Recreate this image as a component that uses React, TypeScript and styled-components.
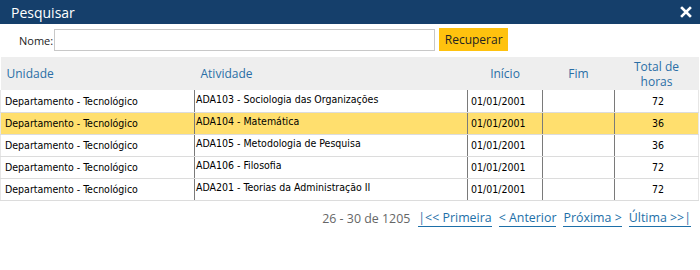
import styled, { createGlobalStyle } from "styled-components";

const GlobalStyle = createGlobalStyle`
  html, body {
    margin: 0;
    padding: 0;
    background: #fff;
  }
`;

const Dialog = styled.div`
  width: 700px;
  height: 270px;
  background: #fff;
  font-family: "Open Sans", "Noto Sans", sans-serif;
`;

const TitleBar = styled.div`
  height: 24px;
  background: #153f6b;
  color: #fff;
  display: flex;
  align-items: center;
  justify-content: space-between;
  padding: 0 8px 0 11px;
  font-size: 14px;
`;

const CloseButton = styled.span`
  display: flex;
  width: 12px;
  height: 12px;
  cursor: pointer;
`;

const SearchRow = styled.div`
  display: flex;
  align-items: center;
  height: 24px;
  margin-top: 4px;
  padding-left: 19px;
`;

const Label = styled.label`
  font-size: 11px;
  color: #222;
  margin-right: 1px;
`;

const Input = styled.input`
  width: 381px;
  height: 22px;
  box-sizing: border-box;
  border: 1px solid #c8c8c8;
  margin: 0 4px 0 0;
`;

const YellowButton = styled.button`
  height: 23px;
  width: 69px;
  background: #ffc20e;
  border: none;
  font-family: "Open Sans", sans-serif;
  font-size: 12px;
  color: #222;
  padding: 0;
  margin-top: -1px;
`;

const Table = styled.table`
  margin-top: 5px;
  width: 698px;
  border-collapse: collapse;
  table-layout: fixed;
`;

const HeadRow = styled.tr`
  height: 33px;
`;

const Th = styled.th<{ $align?: string }>`
  background: #eeeeee;
  color: #2a6ea6;
  font-weight: normal;
  font-size: 12px;
  line-height: 15px;
  padding: 0 6px;
  text-align: ${(p) => p.$align || "left"};
`;

const Row = styled.tr<{ $selected?: boolean }>`
  height: 22px;
  background: ${(p) => (p.$selected ? "#ffdf6e" : "#fff")};
`;

const Td = styled.td<{ $align?: string; $pad?: number; $top?: boolean }>`
  border-bottom: 1px solid #dcdcdc;
  border-left: 1px solid #7a7a7a;
  padding: ${(p) => (p.$top ? "0 0 3px" : "1px 0 0")} ${(p) => p.$pad ?? 3}px;
  line-height: 17px;
  font-family: "DejaVu Sans Condensed", "DejaVu Sans", sans-serif;
  font-size: 10.5px;
  color: #000;
  text-align: ${(p) => p.$align || "left"};
  white-space: nowrap;
  overflow: hidden;
  &:first-child {
    border-left: 1px solid #e6e6e6;
  }
  &:last-child {
    border-right: 1px solid #e6e6e6;
  }
`;

const Pager = styled.div`
  display: flex;
  justify-content: flex-end;
  align-items: center;
  gap: 7px;
  margin-top: 9px;
  padding-right: 9px;
  font-size: 12.4px;
`;

const Count = styled.span`
  color: #666;
  margin-right: 1px;
`;

const PageLink = styled.a`
  color: #1d6fa8;
  text-decoration: none;
  border-bottom: 1px solid #1d6fa8;
  line-height: 16px;
  cursor: pointer;
`;

const rows = [
  { atividade: "ADA103 - Sociologia das Organizações", horas: 72 },
  { atividade: "ADA104 - Matemática", horas: 36, selected: true },
  { atividade: "ADA105 - Metodologia de Pesquisa", horas: 36 },
  { atividade: "ADA106 - Filosofia", horas: 72 },
  { atividade: "ADA201 - Teorias da Administração II", horas: 72 },
];

const App = () => (
  <>
    <GlobalStyle />
    <Dialog>
      <TitleBar>
        <span>Pesquisar</span>
        <CloseButton>
          <svg width="12" height="12" viewBox="0 0 12 12">
            <path d="M2 2 L10 10 M10 2 L2 10" stroke="#fff" strokeWidth="2.6" strokeLinecap="square" />
          </svg>
        </CloseButton>
      </TitleBar>
      <SearchRow>
        <Label>Nome:</Label>
        <Input type="text" />
        <YellowButton>Recuperar</YellowButton>
      </SearchRow>
      <Table>
        <colgroup>
          <col style={{ width: 194 }} />
          <col style={{ width: 273 }} />
          <col style={{ width: 75 }} />
          <col style={{ width: 72 }} />
          <col style={{ width: 84 }} />
        </colgroup>
        <thead>
          <HeadRow>
            <Th>Unidade</Th>
            <Th>Atividade</Th>
            <Th $align="center">Início</Th>
            <Th $align="center">Fim</Th>
            <Th $align="center">
              Total de
              <br />
              horas
            </Th>
          </HeadRow>
        </thead>
        <tbody>
          {rows.map((r) => (
            <Row key={r.atividade} $selected={r.selected}>
              <Td $pad={4}>Departamento - Tecnológico</Td>
              <Td $pad={1} $top>
                {r.atividade}
              </Td>
              <Td>01/01/2001</Td>
              <Td></Td>
              <Td $align="center">{r.horas}</Td>
            </Row>
          ))}
        </tbody>
      </Table>
      <Pager>
        <Count>26 - 30 de 1205</Count>
        <PageLink>|&lt;&lt; Primeira</PageLink>
        <PageLink>&lt; Anterior</PageLink>
        <PageLink>Próxima &gt;</PageLink>
        <PageLink>Última &gt;&gt;|</PageLink>
      </Pager>
    </Dialog>
  </>
);

export default App;
